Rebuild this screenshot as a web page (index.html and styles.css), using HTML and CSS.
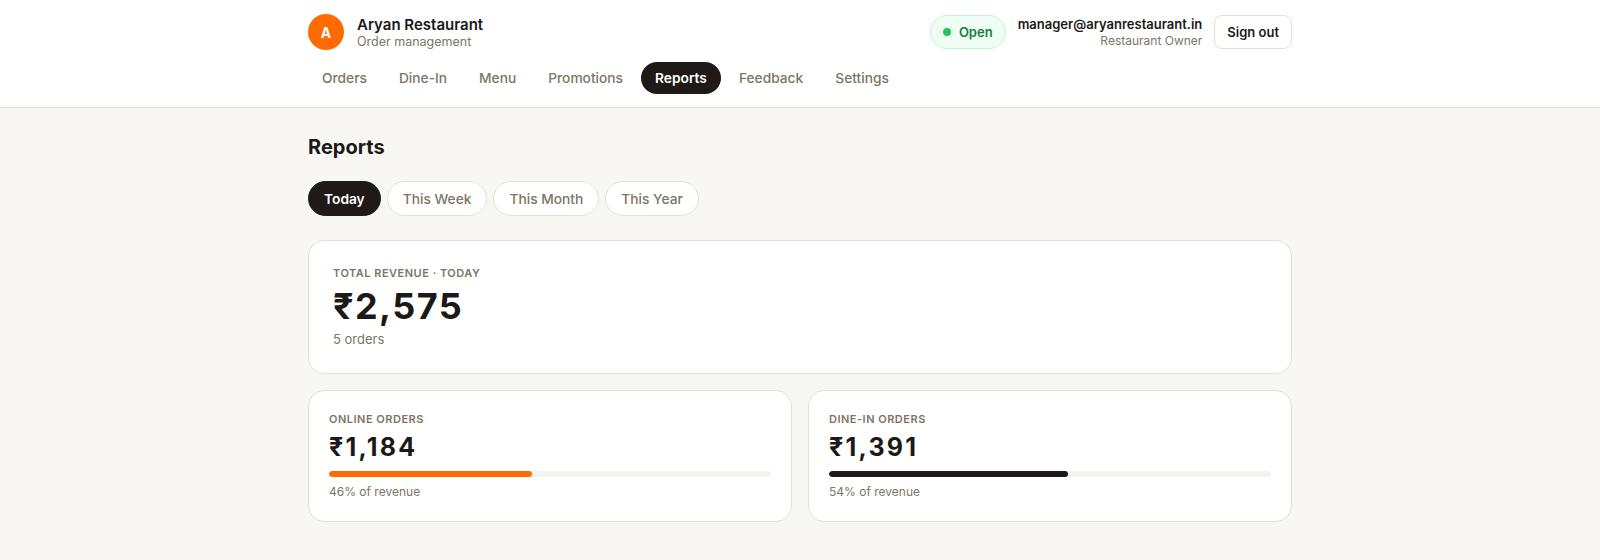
FILE: index.html
```html
<!DOCTYPE html>
<html lang="en">
<head>
    <meta charset="UTF-8">
    <meta name="viewport" content="width=device-width, initial-scale=1.0">
    <title>Reports - Aryan Restaurant</title>
    <link rel="stylesheet" href="styles.css">
</head>
<body>
    <!-- Top bar -->
    <header class="topbar">
        <div class="wrap">
            <div class="topbar-row">
                <div class="brand">
                    <div class="avatar">A</div>
                    <div>
                        <div class="brand-name">Aryan Restaurant</div>
                        <div class="brand-sub">Order management</div>
                    </div>
                </div>
                <div class="account">
                    <span class="status"><span class="status-dot"></span>Open</span>
                    <div class="user">
                        <div class="user-email">manager@aryanrestaurant.in</div>
                        <div class="user-role">Restaurant Owner</div>
                    </div>
                    <button class="btn-outline">Sign out</button>
                </div>
            </div>
            <nav class="tabs">
                <a href="#">Orders</a>
                <a href="#">Dine-In</a>
                <a href="#">Menu</a>
                <a href="#">Promotions</a>
                <a href="#" class="active">Reports</a>
                <a href="#">Feedback</a>
                <a href="#">Settings</a>
            </nav>
        </div>
    </header>

    <main class="wrap page">
        <h1>Reports</h1>

        <div class="ranges">
            <button class="range active">Today</button>
            <button class="range">This Week</button>
            <button class="range">This Month</button>
            <button class="range">This Year</button>
        </div>

        <section class="card card-total">
            <div class="label">Total Revenue · Today</div>
            <div class="total">₹2,575</div>
            <div class="muted">5 orders</div>
        </section>

        <div class="split">
            <section class="card card-small">
                <div class="label">Online Orders</div>
                <div class="amount">₹1,184</div>
                <div class="bar"><div class="bar-fill orange" style="width: 46%"></div></div>
                <div class="muted small">46% of revenue</div>
            </section>
            <section class="card card-small">
                <div class="label">Dine-In Orders</div>
                <div class="amount">₹1,391</div>
                <div class="bar"><div class="bar-fill dark" style="width: 54%"></div></div>
                <div class="muted small">54% of revenue</div>
            </section>
        </div>
    </main>
</body>
</html>
```

FILE: styles.css
```css
body {
    font-family: Inter, "Noto Sans", sans-serif;
    margin: 0;
    padding: 0;
    background-color: #f9f7f3;
    color: #1c1917;
}
.wrap {
    max-width: 1024px;
    margin: 0 auto;
    padding: 0 20px;
    box-sizing: border-box;
}
.topbar {
    background-color: white;
    border-bottom: 1px solid #e6e1d7;
    padding: 14px 0 13px;
}
.topbar-row {
    display: flex;
    justify-content: space-between;
    align-items: center;
    height: 36px;
}
.brand {
    display: flex;
    align-items: center;
    gap: 13px;
}
.avatar {
    width: 36px;
    height: 36px;
    border-radius: 50%;
    background-color: #ff6b00;
    color: white;
    font-weight: 700;
    font-size: 14px;
    display: flex;
    align-items: center;
    justify-content: center;
}
.brand-name {
    font-size: 15px;
    font-weight: 600;
    line-height: 19px;
}
.brand-sub {
    font-size: 12.5px;
    color: #7d7565;
    line-height: 16px;
}
.account {
    display: flex;
    align-items: center;
    gap: 12px;
}
.status {
    display: flex;
    align-items: center;
    gap: 8px;
    height: 34px;
    box-sizing: border-box;
    padding: 0 12px;
    border: 1px solid #bbf7d0;
    background-color: #f0fdf4;
    color: #15803d;
    border-radius: 17px;
    font-size: 13px;
    font-weight: 600;
}
.status-dot {
    width: 8px;
    height: 8px;
    border-radius: 50%;
    background-color: #22c55e;
}
.user {
    text-align: right;
}
.user-email {
    font-size: 13px;
    font-weight: 600;
    line-height: 17px;
}
.user-role {
    font-size: 12px;
    color: #7d7565;
    line-height: 16px;
}
.btn-outline {
    font-family: inherit;
    height: 34px;
    padding: 0 12px;
    background: white;
    border: 1px solid #e6e1d7;
    border-radius: 8px;
    font-size: 13px;
    font-weight: 600;
    color: #1c1917;
}
.tabs {
    display: flex;
    gap: 4px;
    margin-top: 12px;
}
.tabs a {
    height: 32px;
    line-height: 32px;
    padding: 0 14px;
    border-radius: 16px;
    color: #7d7565;
    text-decoration: none;
    font-size: 13.75px;
    font-weight: 500;
}
.tabs a.active {
    background-color: #1f1a17;
    color: white;
    font-weight: 600;
}
.page {
    padding-top: 25px;
    padding-bottom: 40px;
}
h1 {
    font-size: 20px;
    line-height: 28px;
    font-weight: 700;
    margin: 0;
}
.ranges {
    display: flex;
    gap: 6px;
    margin-top: 20px;
}
.range {
    font-family: inherit;
    height: 35px;
    padding: 0 15px;
    border: 1px solid #e6e1d7;
    background: white;
    border-radius: 18px;
    color: #7d7565;
    font-size: 13.75px;
    font-weight: 500;
}
.range.active {
    background-color: #1f1a17;
    border-color: #1f1a17;
    color: white;
    font-weight: 600;
}
.card {
    background: white;
    border: 1px solid #e6e1d7;
    border-radius: 16px;
}
.card-total {
    margin-top: 24px;
    padding: 24px;
}
.label {
    font-size: 11px;
    line-height: 16px;
    font-weight: 600;
    letter-spacing: 0.045em;
    text-transform: uppercase;
    color: #7d7565;
}
.total {
    font-size: 36px;
    line-height: 40px;
    font-weight: 700;
    letter-spacing: 0.04em;
    margin-top: 5px;
}
.muted {
    font-size: 13px;
    line-height: 20px;
    color: #7d7565;
    margin-top: 3px;
}
.split {
    display: grid;
    grid-template-columns: 1fr 1fr;
    gap: 16px;
    margin-top: 16px;
}
.card-small {
    padding: 20px;
}
.amount {
    font-size: 25px;
    line-height: 32px;
    font-weight: 700;
    letter-spacing: 2.2px;
    margin-top: 4px;
}
.bar {
    height: 6px;
    margin-top: 8px;
    border-radius: 3px;
    background-color: #f6f3ee;
    overflow: hidden;
}
.bar-fill {
    height: 100%;
    border-radius: 3px;
}
.bar-fill.orange {
    background-color: #ff6b00;
}
.bar-fill.dark {
    background-color: #1f1a17;
}
.muted.small {
    font-size: 12px;
    line-height: 18px;
    margin-top: 6px;
}
```
